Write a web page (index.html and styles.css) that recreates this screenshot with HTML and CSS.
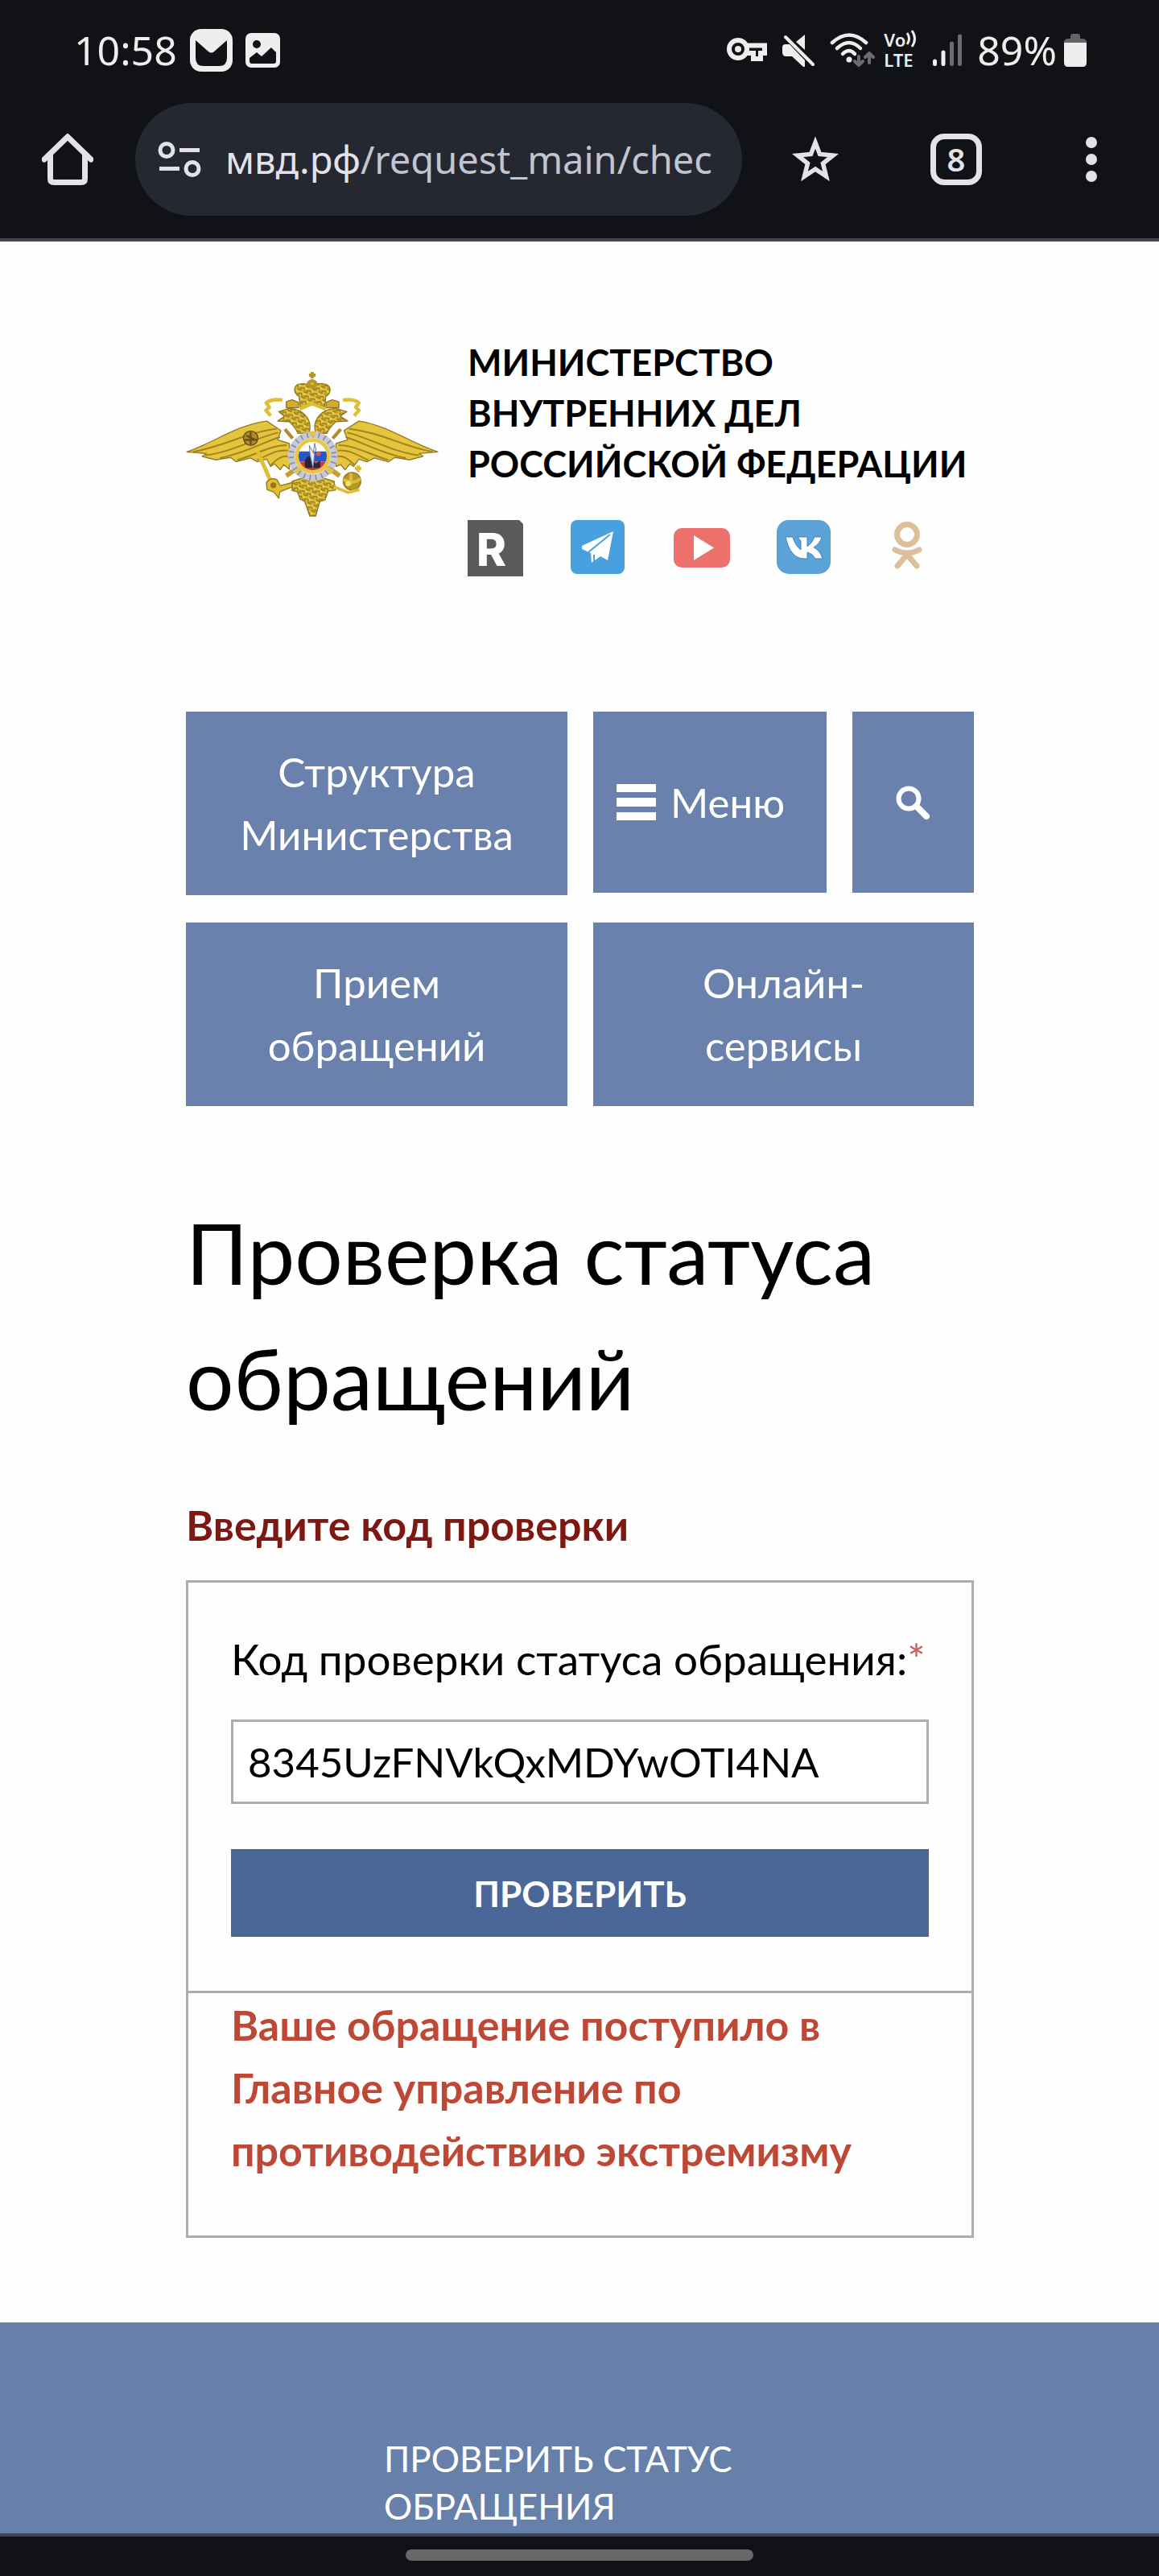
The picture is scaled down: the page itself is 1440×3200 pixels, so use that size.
FILE: index.html
```html
<!DOCTYPE html>
<html lang="ru">
<head>
<meta charset="utf-8">
<meta name="viewport" content="width=device-width, initial-scale=1">
<title>Проверка статуса обращений</title>
<link rel="stylesheet" href="styles.css">
</head>
<body>
<div class="chrome">
  <div class="status">
    <div class="status__group status__group--left">
      <span>10:58</span>
      <svg viewBox="0 0 53 53" width="53" height="53"><rect width="53" height="53" rx="14" fill="#eee"/><path d="M7 14 23 28Q26.500 31 30 28L46 14V36Q46 46 36 46H17Q7 46 7 36Z" fill="#111216"/></svg>
      <svg viewBox="0 0 43 43" width="43" height="43"><rect width="43" height="43" rx="7" fill="#eee"/><circle cx="14" cy="14" r="5" fill="#111216"/><path d="M5 31 14 24 20 29 32 18 38 24V35Q38 38 35 38H8Q5 38 5 35Z" fill="#111216"/></svg>
    </div>
    <div class="status__group status__group--right">
      <svg viewBox="0 0 50 30" width="50" height="30"><circle cx="14" cy="14" r="11" fill="none" stroke="#eee" stroke-width="6"/><circle cx="14" cy="14" r="4" fill="#eee"/><path d="M23 9.500H47V19H42V26H33V19H23" fill="none" stroke="#eee" stroke-width="6"/></svg>
      <svg viewBox="0 0 40 41" width="40" height="41"><path d="M0 17Q0 13 4 13H9L28 33V41H26L12 28H5Q0 28 0 23ZM17 10 28 1V20Z" fill="#eee"/><path d="M4 4 38 38" stroke="#eee" stroke-width="4" stroke-linecap="round"/></svg>
      <span class="status__net">
        <svg viewBox="0 0 56 42" width="56" height="42"><g fill="none" stroke="#eee" stroke-width="4.500" stroke-linecap="round"><path d="M3 12Q24-7 45 12"/><path d="M9 19Q24 5 38 19"/><path d="M16 26Q24 18 31 26"/></g><circle cx="24" cy="33" r="3.500" fill="#eee"/><path d="M36 29V40M31 35 36 40 41 35M49 37V25M44 30 49 25 54 30" fill="none" stroke="#6c6d70" stroke-width="4" stroke-linecap="round"/></svg>
        <span class="volte"><span class="volte__top">Vo<svg viewBox="0 0 14 22" width="14" height="22"><path d="M2 4Q7 11 2 18M8 1Q15 11 8 21" fill="none" stroke="#eee" stroke-width="3"/></svg></span><span class="volte__bottom">LTE</span></span>
      </span>
      <svg viewBox="0 0 36 40" width="36" height="40"><g stroke-width="5" stroke-linecap="round"><path d="M2.500 34V37.500M13 23V37.500" stroke="#eee"/><path d="M23.500 12V37.500M33.500 3V37.500" stroke="#6c6d70"/></g></svg>
      <span class="status__battery">89%
      <svg viewBox="0 0 28 41" width="28" height="41"><path d="M8 3Q8 0 11 0H17Q20 0 20 3V6H22Q28 6 28 11H0Q0 6 6 6H8Z" fill="#646567"/><path d="M0 11H28V36Q28 41 23 41H5Q0 41 0 36Z" fill="#eee"/></svg></span>
    </div>
  </div>
  <div class="toolbar">
    <button class="icon-button" type="button" aria-label="Главная"><svg viewBox="0 0 64 64" width="64" height="64"><path d="M3 32 32 4 61 32M10.500 27V56Q10.500 60.500 15 60.500H49Q53.500 60.500 53.500 56V27" fill="none" stroke="#e3e2e8" stroke-width="7" stroke-linecap="round"/></svg></button>
    <button class="omnibox" type="button">
      <svg viewBox="0 0 54 44" width="54" height="44"><g fill="none" stroke="#e3e2e8"><circle cx="11" cy="10.500" r="8" stroke-width="5"/><circle cx="43" cy="33.500" r="8" stroke-width="5"/><path d="M27 10.500H52M2 33.500H27" stroke-width="5"/></g></svg>
      <span class="omnibox__url"><span class="omnibox__host">мвд.рф</span>/request_main/chec</span>
    </button>
    <div class="toolbar__actions">
      <button class="icon-button" type="button" aria-label="В закладки"><svg viewBox="0 0 60 58" width="60" height="58"><path d="M30 8 35.500 22.500 52 24 39.500 34 43.500 50 30 41 16.500 50 20.500 34 8 24 24.500 22.500Z" fill="none" stroke="#e3e2e8" stroke-width="5.500"/></svg></button>
      <button class="tabs" type="button" aria-label="Вкладки">8</button>
      <button class="icon-button icon-button--more" type="button" aria-label="Меню браузера"><svg viewBox="0 0 14 56" width="14" height="56" fill="#e3e2e8"><circle cx="7" cy="7" r="7"/><circle cx="7" cy="28" r="7"/><circle cx="7" cy="49" r="7"/></svg></button>
    </div>
  </div>
</div>

<div class="page">
  <header class="brand">
    <svg class="brand__emblem" viewBox="34 153 943 545" width="314" height="181" role="img" aria-label="Герб МВД России">
      <defs>
        <pattern id="feather" width="26" height="22" patternUnits="userSpaceOnUse" patternTransform="rotate(24)"><rect width="26" height="22" fill="#dfbd36"/><path d="M0 4Q13 16 26 4M4 14Q12 21 22 14" fill="none" stroke="#8d741b" stroke-width="4"/><path d="M10 0V10" stroke="#f7e06a" stroke-width="4"/></pattern>
        <clipPath id="disc"><circle cx="507" cy="471" r="53"/></clipPath>
      </defs>
      <g stroke="#927823" stroke-width="4" stroke-linejoin="round">
        <g fill="#e6c53d">
          <path d="M36 455C130 425 220 355 335 340L388 375 376 410 420 424V520L398 503 386 522 364 500 350 510 335 482 300 492 275 478 220 492 200 476 145 485 93 472 110 461Z"/>
          <path d="M975 455C880 425 785 355 680 340L624 375 638 410 594 424V510L612 503 628 522 646 500 660 510 680 482 710 492 738 478 790 492 815 476 870 485 920 472 905 461Z"/>
          <path d="M60 455C190 430 250 385 372 368M105 468C210 455 300 400 378 383M160 478C250 462 330 415 385 400M225 485C290 468 350 430 410 430M300 485C340 468 370 445 414 450M350 505C375 480 390 470 414 472M955 455C830 430 770 385 642 368M905 468C800 455 714 400 636 383M855 478C765 462 685 415 630 400M790 485C725 468 665 430 604 430M714 485C674 468 644 445 600 450M664 505C639 480 624 470 600 472" fill="none" stroke="#a08422" stroke-width="6"/>
        </g>
        <path d="M430 565 505 540 587 565 592 598 565 602 553 635 534 640 518 695H496L477 640 460 632 450 605 430 600Z" fill="url(#feather)"/>
        <path d="M461 290 456 248C430 230 434 200 470 200Q490 200 505 212 520 198 545 200C580 204 578 235 556 248L551 290Q506 270 461 290Z" fill="url(#feather)"/>
        <path d="M491 198Q505 180 519 198L514 210H496ZM505 180V156M493 168H518" fill="#ddb936" stroke="#b9962a" stroke-width="12"/>
        <path d="M494 384C506 340 480 298 420 292L380 305 402 322 376 340 420 342Q444 366 452 386ZM518 384C506 340 532 298 592 292L634 305 610 322 638 340 594 342Q568 366 560 386Z" fill="url(#feather)"/>
        <path d="M408 290V268L430 260 454 270V290ZM557 290V270L580 260 605 268V290Z" fill="#d3ad30"/>
        <path d="M394 262Q355 255 333 272L345 288 332 300 350 320M620 262Q660 255 680 272L668 288 680 300 662 320M458 295 505 275 556 295" fill="none" stroke="#dfbd36" stroke-width="13"/>
        <path d="M403 370 432 405M612 370 582 405" stroke="#b48d28" stroke-width="13"/>
        <path d="M408 545 435 525M608 545 580 525" stroke="#c6a02d" stroke-width="18"/>
        <circle cx="275" cy="404" r="27" fill="#b18c29" stroke="#5c4913"/><path d="M258 394 292 410M275 380V428M252 410H298" stroke="#665019" stroke-width="7"/>
        <path d="M300 452 352 570" stroke="#dfbd36" stroke-width="15"/><path d="M334 570Q350 548 374 560L386 582 430 570V586L384 604 380 628 362 606 336 596Z" fill="#e2be33"/><circle cx="360" cy="580" r="9" fill="#927823"/>
        <circle cx="654" cy="565" r="33" fill="#b79628"/><path d="M622 558Q655 580 686 555M650 578V535M677 505V530M665 517H689M586 586 640 607 682 596" fill="none" stroke="#dfbd36" stroke-width="11"/><circle cx="640" cy="574" r="10" fill="#efe26d" stroke="none"/>
      </g>
      <circle cx="507" cy="471" r="80" fill="none" stroke="#c8c9d5" stroke-width="25"/>
      <circle cx="507" cy="471" r="80" fill="none" stroke="#8a8c99" stroke-width="20" stroke-dasharray="5 17"/>
      <path d="M496 378H518V396H496ZM440 524 463 505 472 515 448 538ZM552 515 562 505 586 525 574 540Z" fill="#e5c443"/>
      <circle cx="507" cy="471" r="60" fill="#fff" stroke="#e8c744" stroke-width="14"/>
      <g clip-path="url(#disc)"><path d="M450 453H565V492H450Z" fill="#2957c9"/><path d="M450 492H565V530H450Z" fill="#d13b2c"/><path d="M494 470Q470 480 480 515H535V487L518 500Z" fill="#24263c"/><path d="M494 430 514 465 508 515 498 470ZM514 422 520 448 510 460Z" fill="#e5e7ef" stroke="#777f96" stroke-width="3"/><circle cx="528" cy="462" r="9" fill="#e45744"/></g>
    </svg>
    <div class="brand__body">
      <p class="brand__name">МИНИСТЕРСТВО<br>ВНУТРЕННИХ ДЕЛ<br>РОССИЙСКОЙ ФЕДЕРАЦИИ</p>
      <div class="social">
        <a href="#rutube" aria-label="Rutube"><svg viewBox="0 0 70 70" width="70" height="70"><path d="M0 0H64L69 5V70H0Z" fill="#5a5a5a"/><text class="social__r" x="11" y="57">R</text></svg></a>
        <a href="#telegram" aria-label="Telegram"><svg viewBox="0 0 70 70" width="70" height="70"><rect width="67" height="67" rx="8" fill="#48a0df"/><path d="M53 14 46 50 37 45 26 53 25 41 14 36V32Z" fill="#fff"/><path d="M49 18 22 40M29 43V51" stroke="#48a0df" stroke-width="2"/></svg></a>
        <a href="#youtube" aria-label="YouTube"><svg viewBox="0 0 70 70" width="70" height="70"><rect y="10" width="70" height="49" rx="10" fill="#ec716d"/><path d="M25 19V50L50 34.500Z" fill="#fff"/></svg></a>
        <a href="#vk" aria-label="ВКонтакте"><svg viewBox="0 0 70 70" width="70" height="70"><rect width="67" height="67" rx="15" fill="#5ba2d8"/><path d="M11 21H20Q23 32 30 37V26L26 21H38V33Q44 29 47 21H56Q54 29 46 34 54 38 57 48H48Q44 41 38 40V48H34Q17 48 11 21Z" fill="#fff" stroke="#3e82c6"/></svg></a>
        <a href="#ok" aria-label="Одноклассники"><svg viewBox="0 0 70 70" width="70" height="70"><g fill="none" stroke="#dcc09a" stroke-width="7" stroke-linecap="round"><circle cx="34" cy="18" r="12.500"/><path d="M19 37Q34 45 49 37M34 43 22 57M34 43 46 57"/></g></svg></a>
      </div>
    </div>
  </header>

  <nav class="menu">
    <a class="tile" href="#structure">Структура Министерства</a>
    <button class="tile tile--short tile--menu" type="button"><svg viewBox="0 0 49 45" width="49" height="45"><path d="M0 0H49V10H0ZM0 17H49V28H0ZM0 35H49V45H0Z" fill="#fff"/></svg>Меню</button>
    <button class="tile tile--short" type="button" aria-label="Поиск"><svg viewBox="0 0 42 42" width="42" height="42"><circle cx="16" cy="16" r="12.500" fill="none" stroke="#fff" stroke-width="6"/><path d="M26 26 38 38" stroke="#fff" stroke-width="8" stroke-linecap="round"/></svg></button>
    <a class="tile" href="#requests">Прием<br>обращений</a>
    <a class="tile tile--wide" href="#services">Онлайн-<br>сервисы</a>
  </nav>

  <main>
    <h1 class="title">Проверка статуса обращений</h1>
    <p class="hint">Введите код проверки</p>
    <section class="card">
      <form class="check">
        <label class="check__label" for="code">Код проверки статуса обращения:<span class="check__required">*</span></label>
        <input class="check__input" id="code" type="text" value="8345UzFNVkQxMDYwOTI4NA">
        <button class="check__submit" type="submit">ПРОВЕРИТЬ</button>
      </form>
      <p class="result">Ваше обращение поступило в Главное управление по противодействию экстремизму</p>
    </section>
  </main>
</div>

<footer class="footer">
  <a class="footer__link" href="#status">ПРОВЕРИТЬ СТАТУС ОБРАЩЕНИЯ</a>
</footer>
<div class="gesture"><span class="gesture__pill"></span></div>
</body>
</html>
```
FILE: styles.css
```css
:root {
  --bar: #111216;
  --bar-ink: #e3e2e8;
  --tile: #6981ac;
  --line: #adadad;
  --ui: "Noto Sans", "Open Sans", sans-serif;
  --text: Lato, "Noto Sans", sans-serif;
}

* { box-sizing: border-box; }

body {
  margin: 0;
  background: #fefefe;
  color: #000;
  font: 52px/78px var(--text);
}

p, h1 { margin: 0; }
svg { display: block; flex: none; }
a { color: inherit; text-decoration: none; }

button {
  border: 0;
  padding: 0;
  background: none;
  color: inherit;
  font: inherit;
}

/* Browser chrome */
.chrome {
  background: var(--bar);
  border-bottom: 4px solid #44454d;
  font-family: var(--ui);
}

.status {
  display: flex;
  justify-content: space-between;
  align-items: center;
  height: 124px;
  padding: 0 90px 0 92px;
  color: #eee;
  font-size: 50px;
}

.status__group { display: flex; align-items: center; }
.status__group--left { gap: 16px; }
.status__group--right { gap: 19px; }
.status__net { display: flex; align-items: center; gap: 11px; }
.status__battery { display: flex; align-items: center; gap: 9px; }

.volte { width: 42px; font-size: 22px; font-weight: 600; line-height: 25px; }
.volte__top { display: flex; height: 25px; }
.volte__bottom { display: block; }

.toolbar {
  display: flex;
  align-items: center;
  padding: 4px 62px 28px 52px;
}

.icon-button { display: flex; justify-content: center; }
.icon-button--more { width: 45px; }

.omnibox {
  flex: 1;
  display: flex;
  align-items: center;
  gap: 30px;
  min-width: 0;
  height: 140px;
  margin: 0 61px 0 52px;
  padding: 0 28px;
  border-radius: 70px;
  background: #252831;
  color: #c2c5d0;
  font-size: 47px;
}

.omnibox__url { overflow: hidden; white-space: nowrap; }
.omnibox__host { color: var(--bar-ink); }

.toolbar__actions { display: flex; align-items: center; gap: 113px; }

.tabs {
  width: 64px;
  height: 64px;
  border: 7px solid var(--bar-ink);
  border-radius: 17px;
  color: var(--bar-ink);
  font-size: 40px;
  font-weight: 600;
  line-height: 50px;
}

/* Site */
.page { padding: 119px 230px 105px 231px; }

.brand { display: flex; gap: 36px; margin-bottom: 168px; }
.brand__emblem { margin-top: 42px; }
.brand__name { font-size: 45px; font-weight: 700; line-height: 63px; white-space: nowrap; }
.social { display: flex; gap: 58px; margin-top: 38px; }
.social a { line-height: 70px; }
.social svg { overflow: visible; }
.social__r { fill: #fff; font: 800 56px Inter, sans-serif; }

.menu {
  display: grid;
  grid-template-columns: 473fr 289fr 151fr;
  gap: 34px 32px;
  margin-bottom: 103px;
  color: #fff;
  font-size: 51px;
}

.tile {
  display: flex;
  justify-content: center;
  align-items: center;
  gap: 18px;
  padding: 36px 24px;
  background: var(--tile);
  text-align: center;
}

.tile--short { margin-bottom: 3px; }
.tile--menu { justify-content: flex-start; padding-left: 29px; }
.tile--wide { grid-column: span 2; }

.title { margin-bottom: 66px; font-size: 105px; font-weight: 400; line-height: 156px; }
.hint { margin-bottom: 30px; color: #7d1912; font-weight: 700; }

.card { border: 3px solid var(--line); }

.check {
  display: flex;
  flex-direction: column;
  padding: 56px 53px 67px;
  border-bottom: 3px solid var(--line);
}

.check__label { margin-bottom: 36px; font-size: 53px; white-space: nowrap; }
.check__required { color: #c9605b; }

.check__input {
  width: 100%;
  height: 105px;
  margin-bottom: 56px;
  padding: 0 18px;
  border: 3px solid var(--line);
  background: #fff;
  color: #000;
  font: 51px var(--text);
}

.check__submit {
  height: 109px;
  background: #4a6798;
  color: #fff;
  font-size: 44px;
  font-weight: 700;
}

.result { padding: 0 53px 67px; color: #bd4836; font-weight: 700; }

.footer { padding: 140px 477px 4px; background: #6680aa; color: #fff; }
.footer__link { display: block; font-size: 44px; line-height: 59px; }

.gesture {
  display: flex;
  justify-content: center;
  padding: 16px 0 19px;
  border-top: 4px solid #40454f;
  background: var(--bar);
}

.gesture__pill { width: 30%; height: 14px; border-radius: 7px; background: #68686a; }
```
